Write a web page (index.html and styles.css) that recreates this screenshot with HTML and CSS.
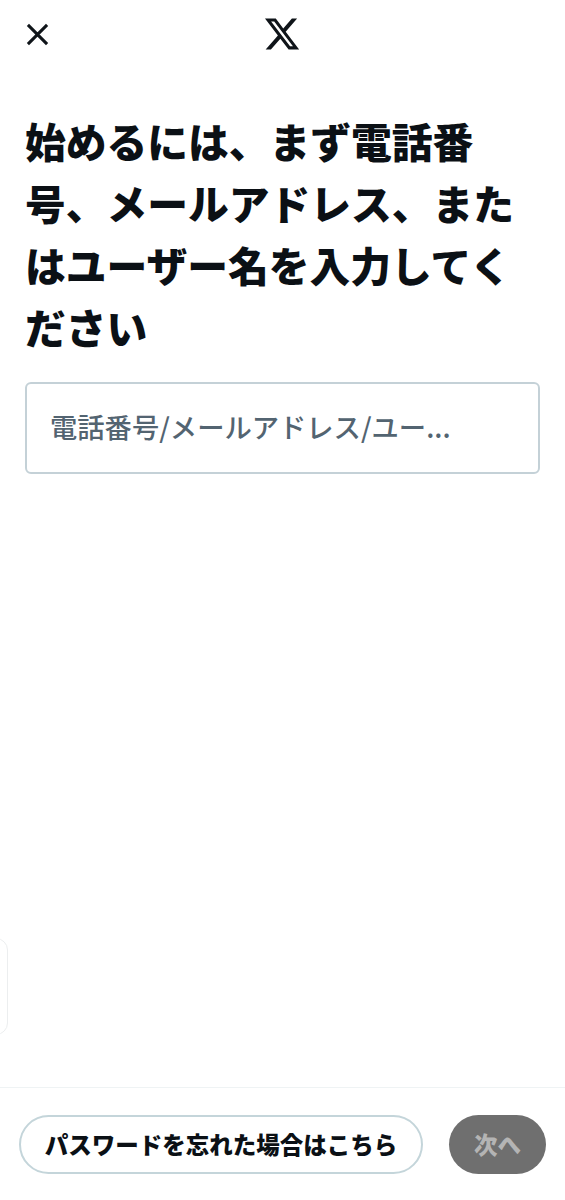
FILE: index.html
```html
<!DOCTYPE html>
<html lang="ja">
<head>
<meta charset="utf-8">
<title>X</title>
<link rel="stylesheet" href="styles.css">
</head>
<body>
<div class="page">
  <header class="topbar">
    <svg class="close" viewBox="0 0 24 24" aria-label="閉じる"><path d="M2 2 22 22M22 2 2 22"/></svg>
    <svg class="logo" viewBox="0 0 24 24" aria-label="X"><path d="M18.244 2.25h3.308l-7.227 8.26 8.502 11.24H16.17l-5.214-6.817L4.99 21.75H1.68l7.73-8.835L1.254 2.25H8.08l4.713 6.231zm-1.161 17.52h1.833L7.084 4.126H5.117z"/></svg>
  </header>
  <main class="content">
    <h1 class="title">始めるには、まず電話番号、メールアドレス、またはユーザー名を入力してください</h1>
    <div class="field"><span class="placeholder">電話番号/メールアドレス/ユー...</span></div>
    <div class="side-tab"></div>
  </main>
  <footer class="footer">
    <button class="btn btn-outline">パスワードを忘れた場合はこちら</button>
    <button class="btn btn-next">次へ</button>
  </footer>
</div>
</body>
</html>
```
FILE: styles.css
```css
* { box-sizing: border-box; }
html, body { margin: 0; padding: 0; background: #fff; }
body { font-family: "Noto Sans CJK JP", "Noto Sans", sans-serif; color: #0f1419; }
.page { display: flex; flex-direction: column; height: 1200px; width: 565px; overflow: hidden; }
.topbar { position: relative; display: flex; justify-content: center; align-items: center; height: 68px; }
.close { position: absolute; left: 26px; top: 23px; width: 23px; height: 23px; fill: none; stroke: #0f1419; stroke-width: 3.2; stroke-linecap: butt; }
.logo { width: 38px; height: 38px; margin-left: -0.5px; fill: #0f1419; }
.content { position: relative; flex: 1; padding: 42px 25px 0; }
.title { margin: 0; font-size: 40.75px; line-height: 62px; font-weight: 900; color: #0b1015; }
.field { display: flex; align-items: center; height: 92px; margin-top: 24px; padding: 0 23px 5px; border: 2px solid #c4d1d7; border-radius: 6px; }
.placeholder { font-size: 27.3px; font-weight: 500; color: #536471; white-space: nowrap; }
.side-tab { position: absolute; left: -24px; top: 870px; width: 32px; height: 97px; border: 1px solid #eceeef; border-radius: 12px; }
.footer { display: flex; justify-content: space-between; align-items: center; height: 113px; padding: 0 19px; border-top: 1px solid #eff3f4; }
.btn { height: 59px; border-radius: 30px; font-family: inherit; font-weight: 900; font-size: 23.5px; padding: 0; }
.btn-outline { width: 404px; background: #fff; border: 2px solid #c4d5da; color: #0b1015; }
.btn-next { width: 97px; background: #6f6f6f; border: none; color: #b4b4b4; }
```
